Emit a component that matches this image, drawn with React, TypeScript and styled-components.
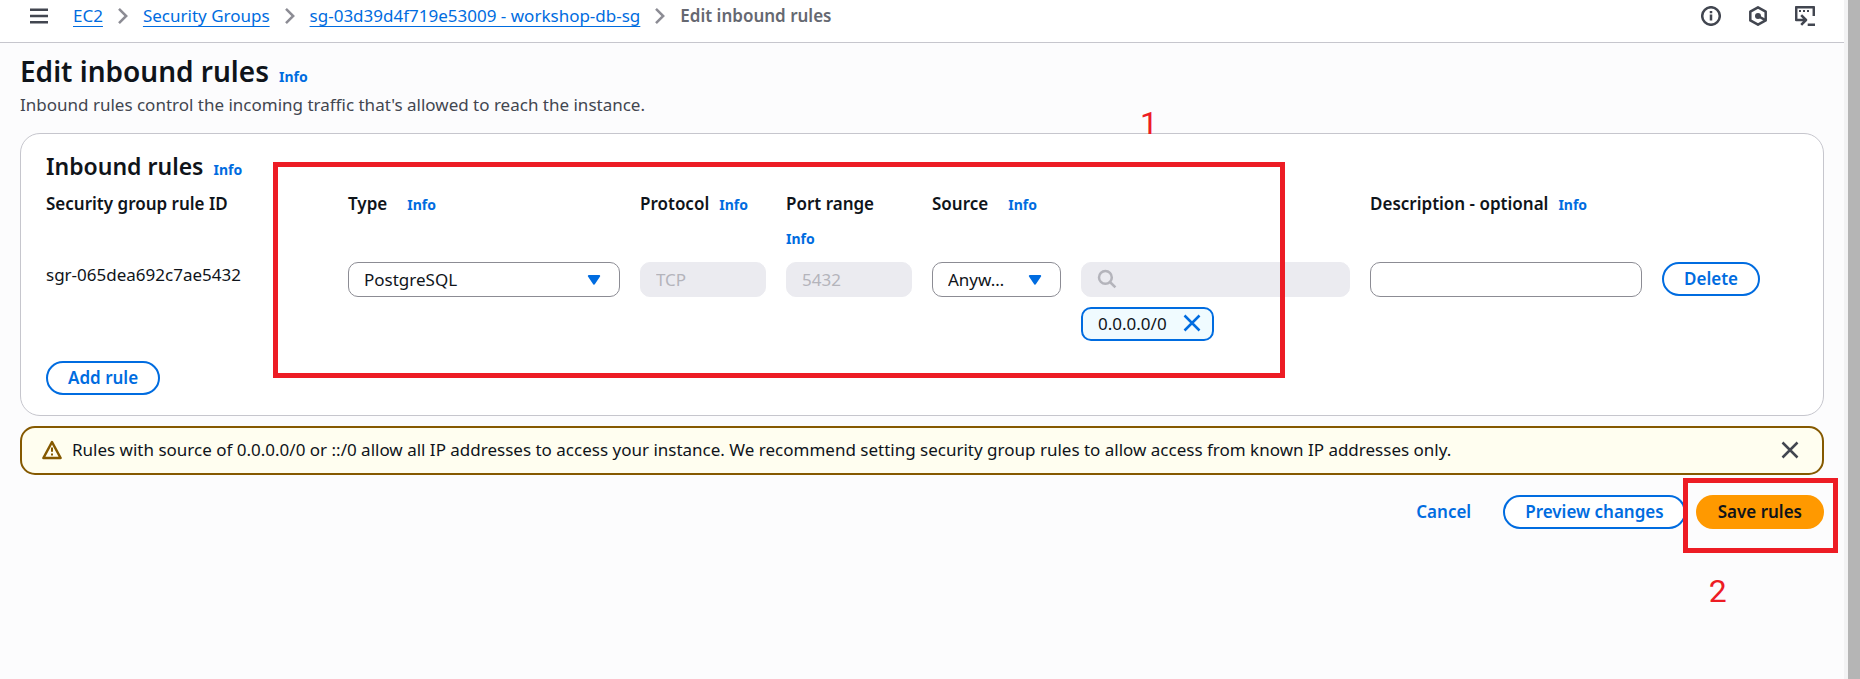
import React from 'react';
import styled, { createGlobalStyle, css } from 'styled-components';

const color = {
  text: '#0f141a',
  secondary: '#424650',
  muted: '#656871',
  link: '#006ce0',
  border: '#c6c6cd',
  inputBorder: '#8c8c94',
  disabledBg: '#ebebf0',
  disabledText: '#b4b4bb',
  warning: '#855900',
  mark: '#ed1c24',
};

const GlobalStyle = createGlobalStyle`
  *, *::before, *::after { box-sizing: border-box; }
  body {
    margin: 0;
    background: #fcfcfd;
    color: ${color.text};
    font: 400 17px/25px 'Noto Sans', 'Open Sans', sans-serif;
  }
  button, input, select { font: inherit; color: inherit; }
`;

const Page = styled.div`
  display: flex;
  min-height: 100vh;
  overflow: hidden;
`;

const Content = styled.div`
  flex: 1;
  min-width: 0;
`;

const ScrollTrack = styled.div`
  flex: 0 0 16px;
  background: #b5b5b5;
  border-left: 4px solid #f3f3f4;
`;

const TopBar = styled.header`
  display: flex;
  align-items: center;
  justify-content: space-between;
  padding: 3px 29px 14px;
  background: #fff;
  border-bottom: 1px solid ${color.border};
`;

const TopBarStart = styled.div`
  display: flex;
  align-items: center;
  gap: 24px;
`;

const TopBarTools = styled.div`
  display: flex;
  gap: 27px;
`;

const IconButton = styled.button<{ $tone?: string }>`
  display: flex;
  padding: 0;
  border: 0;
  background: none;
  color: ${(p) => p.$tone ?? color.secondary};
  cursor: pointer;
`;

const Icon = styled.svg`
  display: block;
  flex: none;
  width: 20px;
  height: 20px;
  fill: none;
  stroke: currentColor;
  stroke-width: 2.5;
`;

const Crumbs = styled.ol`
  display: flex;
  align-items: center;
  margin: 0;
  padding: 0;
  list-style: none;
`;

const Crumb = styled.li`
  display: flex;
  align-items: center;
  color: ${color.muted};
  font-weight: ${(p) => (p['aria-current'] ? 600 : 400)};

  svg {
    margin: 0 10px;
    color: ${color.inputBorder};
  }
`;

const CrumbLink = styled.a`
  color: ${color.link};
  text-decoration: underline 1px;
  text-decoration-skip-ink: none;
  text-underline-offset: 4px;
`;

const Main = styled.main`
  padding: 10px 20px 0;
`;

const TitleRow = styled.div`
  display: flex;
  align-items: baseline;
  gap: 10px;
`;

const PageTitle = styled.h1`
  margin: 0;
  font-size: 28px;
  line-height: 36px;
  font-weight: 600;
`;

const SectionTitle = styled.h2`
  margin: 0;
  font-size: 23px;
  line-height: 30px;
  font-weight: 600;
`;

const InfoLink = styled.a`
  color: ${color.link};
  font-size: 14px;
  font-weight: 700;
  text-decoration: none;
`;

const Description = styled.p`
  margin: 3px 0 16px;
  color: ${color.secondary};
`;

const Card = styled.section`
  position: relative;
  padding: 17px 25px 20px;
  border: 1px solid ${color.border};
  border-radius: 20px;
  background: #fff;
`;

const RuleGrid = styled.div`
  display: grid;
  grid-template-columns: 282fr 272fr 126fr 126fr 129fr 269fr 272fr 136fr;
  column-gap: 20px;
  row-gap: 11px;
  margin: 9px 0 20px;
`;

const HeadCell = styled.div<{ $gap?: number; $span?: number }>`
  display: flex;
  flex-wrap: wrap;
  align-content: flex-start;
  align-items: baseline;
  gap: 10px ${(p) => p.$gap ?? 10}px;
  min-width: 0;
  grid-column: span ${(p) => p.$span ?? 1};
  font-weight: 600;
`;

const Cell = styled.div`
  display: flex;
  flex-direction: column;
  align-items: flex-start;
  gap: 10px;
  min-width: 0;
`;

const field = css`
  width: 100%;
  height: 35px;
  padding: 0 15px 1px;
  border: 1px solid ${color.inputBorder};
  border-radius: 10px;
  background: #fff;
`;

const TextInput = styled.input`
  ${field}

  &:disabled {
    border-color: ${color.disabledBg};
    background: ${color.disabledBg};
    color: ${color.disabledText};
  }
`;

const SelectBox = styled.div`
  display: grid;
  align-items: center;
  width: 100%;

  > * {
    grid-area: 1 / 1;
  }
  > svg {
    justify-self: end;
    margin-right: 16px;
    color: ${color.link};
    pointer-events: none;
  }
`;

const Select = styled.select`
  ${field}
  padding-right: 46px;
  appearance: none;
  overflow: hidden;
  text-overflow: ellipsis;
  white-space: nowrap;
`;

const SearchBox = styled.label`
  ${field}
  display: flex;
  align-items: center;
  gap: 10px;
  border-color: ${color.disabledBg};
  background: ${color.disabledBg};
  color: ${color.disabledText};
`;

const SearchInput = styled.input`
  flex: 1;
  min-width: 0;
  padding: 0;
  border: 0;
  background: none;
`;

const Token = styled.span`
  display: flex;
  align-items: center;
  gap: 15px;
  height: 34px;
  padding: 0 10px 2px 15px;
  border: 2px solid ${color.link};
  border-radius: 10px;
  background: #f0fbff;
`;

const Button = styled.button<{ $kind?: 'normal' | 'link' | 'primary' }>`
  height: 34px;
  padding: 0 20px 1px;
  border: 2px solid ${color.link};
  border-radius: 20px;
  background: #fff;
  color: ${color.link};
  font-weight: 600;
  white-space: nowrap;
  cursor: pointer;

  ${(p) =>
    p.$kind === 'link' &&
    css`
      border-color: transparent;
      background: none;
    `}
  ${(p) =>
    p.$kind === 'primary' &&
    css`
      border-color: #ff9900;
      background: #ff9900;
      color: ${color.text};
    `}
`;

const Alert = styled.div`
  display: flex;
  align-items: center;
  gap: 10px;
  margin-top: 10px;
  padding: 9px 22px 11px 20px;
  border: 2px solid ${color.warning};
  border-radius: 15px;
  background: #fffef0;

  > svg {
    color: ${color.warning};
  }
`;

const AlertText = styled.p`
  flex: 1;
  margin: 0;
`;

const Actions = styled.div`
  display: flex;
  justify-content: flex-end;
  gap: 10px;
  margin-top: 20px;
`;

const SaveSlot = styled.div`
  position: relative;
`;

/* Tutorial annotations lying over the console page. */
const Outline = styled.div`
  position: absolute;
  z-index: 1;
  border: 5px solid ${color.mark};
  pointer-events: none;
`;

const RulesOutline = styled(Outline)`
  top: 28px;
  bottom: 37px;
  left: 14%;
  right: 538px;
`;

const SaveOutline = styled(Outline)`
  top: -17px;
  right: -14px;
  bottom: -24px;
  left: -13px;
`;

const StepNumber = styled.span`
  position: absolute;
  color: ${color.mark};
  font: 400 32px/36px Roboto, Arial, sans-serif;
`;

const RulesStep = styled(StepNumber)`
  top: -29px;
  right: 665px;
`;

const SaveStep = styled(StepNumber)`
  top: 78px;
  left: 13px;
`;

const Chevron = () => (
  <Icon viewBox="0 0 20 20" aria-hidden="true">
    <path d="M6 2.8 13.2 10 6 17.2" />
  </Icon>
);

const Caret = () => (
  <Icon viewBox="0 0 20 20" aria-hidden="true">
    <path
      d="M4.8 6h10.4L10 13.6z"
      fill="currentColor"
      strokeWidth="2"
      strokeLinejoin="round"
    />
  </Icon>
);

const Cross = () => (
  <Icon viewBox="0 0 20 20" aria-hidden="true">
    <path d="M2.5 2.5l15 15M17.5 2.5l-15 15" />
  </Icon>
);

const Info = () => <InfoLink href="#info">Info</InfoLink>;

export default function App() {
  return (
    <>
      <GlobalStyle />
      <Page>
        <Content>
          <TopBar>
            <TopBarStart>
              <IconButton aria-label="Open navigation">
                <Icon viewBox="0 0 20 20">
                  <path d="M1 3.8h18M1 10h18M1 16.2h18" />
                </Icon>
              </IconButton>
              <nav aria-label="Breadcrumbs">
                <Crumbs>
                  <Crumb>
                    <CrumbLink href="#ec2">EC2</CrumbLink>
                    <Chevron />
                  </Crumb>
                  <Crumb>
                    <CrumbLink href="#groups">Security Groups</CrumbLink>
                    <Chevron />
                  </Crumb>
                  <Crumb>
                    <CrumbLink href="#group">sg-03d39d4f719e53009 - workshop-db-sg</CrumbLink>
                    <Chevron />
                  </Crumb>
                  <Crumb aria-current="page">Edit inbound rules</Crumb>
                </Crumbs>
              </nav>
            </TopBarStart>
            <TopBarTools>
              <IconButton aria-label="Help panel">
                <Icon viewBox="0 0 20 20">
                  <circle cx="10" cy="10" r="8.8" />
                  <path d="M10 5v2.2M10 8.6v6" />
                </Icon>
              </IconButton>
              <IconButton aria-label="Resources">
                <Icon viewBox="0 0 20 20">
                  <path
                    d="M10 1.3 17.7 5.6v8.8L10 18.7 2.3 14.4V5.6z"
                    strokeLinejoin="round"
                  />
                  <path d="M10 10l7.4 4.2" />
                  <circle cx="10" cy="10" r="3" fill="currentColor" stroke="none" />
                </Icon>
              </IconButton>
              <IconButton aria-label="CloudShell">
                <Icon viewBox="0 0 20 20" strokeLinejoin="round">
                  <path d="M18.8 10V1.2H1.2V14H11M6.2 9.2 11 14l-4.8 4.8M12.7 18.8H20" />
                  <path d="M4 5h2M8 5h2M12 5h2" strokeWidth="2" />
                </Icon>
              </IconButton>
            </TopBarTools>
          </TopBar>

          <Main>
            <TitleRow>
              <PageTitle>Edit inbound rules</PageTitle>
              <Info />
            </TitleRow>
            <Description>
              Inbound rules control the incoming traffic that's allowed to reach the instance.
            </Description>

            <Card>
              <TitleRow>
                <SectionTitle>Inbound rules</SectionTitle>
                <Info />
              </TitleRow>
              <RuleGrid>
                <HeadCell>Security group rule ID</HeadCell>
                <HeadCell $gap={20}>
                  <label htmlFor="type">Type</label>
                  <Info />
                </HeadCell>
                <HeadCell>
                  <label htmlFor="protocol">Protocol</label>
                  <Info />
                </HeadCell>
                <HeadCell>
                  <label htmlFor="port">Port range</label>
                  <Info />
                </HeadCell>
                <HeadCell $gap={20} $span={2}>
                  <label htmlFor="source">Source</label>
                  <Info />
                </HeadCell>
                <HeadCell $span={2}>
                  <label htmlFor="description">Description - optional</label>
                  <Info />
                </HeadCell>

                <Cell>sgr-065dea692c7ae5432</Cell>
                <Cell>
                  <SelectBox>
                    <Select id="type">
                      <option>PostgreSQL</option>
                    </Select>
                    <Caret />
                  </SelectBox>
                </Cell>
                <Cell>
                  <TextInput id="protocol" defaultValue="TCP" disabled />
                </Cell>
                <Cell>
                  <TextInput id="port" defaultValue="5432" disabled />
                </Cell>
                <Cell>
                  <SelectBox>
                    <Select id="source">
                      <option>Anyw…</option>
                    </Select>
                    <Caret />
                  </SelectBox>
                </Cell>
                <Cell>
                  <SearchBox>
                    <Icon viewBox="0 0 20 20" aria-hidden="true">
                      <circle cx="8.4" cy="8.4" r="6.4" />
                      <path d="M13 13l5.4 5.4" />
                    </Icon>
                    <SearchInput type="search" aria-label="Source addresses" disabled />
                  </SearchBox>
                  <Token>
                    0.0.0.0/0
                    <IconButton $tone={color.link} aria-label="Remove 0.0.0.0/0">
                      <Cross />
                    </IconButton>
                  </Token>
                </Cell>
                <Cell>
                  <TextInput id="description" />
                </Cell>
                <Cell>
                  <Button>Delete</Button>
                </Cell>
              </RuleGrid>
              <Button>Add rule</Button>
              <RulesOutline />
              <RulesStep>1</RulesStep>
            </Card>

            <Alert role="status">
              <Icon viewBox="0 0 20 20" aria-hidden="true">
                <path d="M10 2 18.6 18H1.4z" strokeLinejoin="round" />
                <path d="M10 7.4v4.4M10 13.4v2.2" strokeWidth="2" />
              </Icon>
              <AlertText>
                Rules with source of 0.0.0.0/0 or ::/0 allow all IP addresses to access your
                instance. We recommend setting security group rules to allow access from known IP
                addresses only.
              </AlertText>
              <IconButton aria-label="Dismiss">
                <Cross />
              </IconButton>
            </Alert>

            <Actions>
              <Button $kind="link">Cancel</Button>
              <Button>Preview changes</Button>
              <SaveSlot>
                <Button $kind="primary">Save rules</Button>
                <SaveOutline />
                <SaveStep>2</SaveStep>
              </SaveSlot>
            </Actions>
          </Main>
        </Content>
        <ScrollTrack />
      </Page>
    </>
  );
}
